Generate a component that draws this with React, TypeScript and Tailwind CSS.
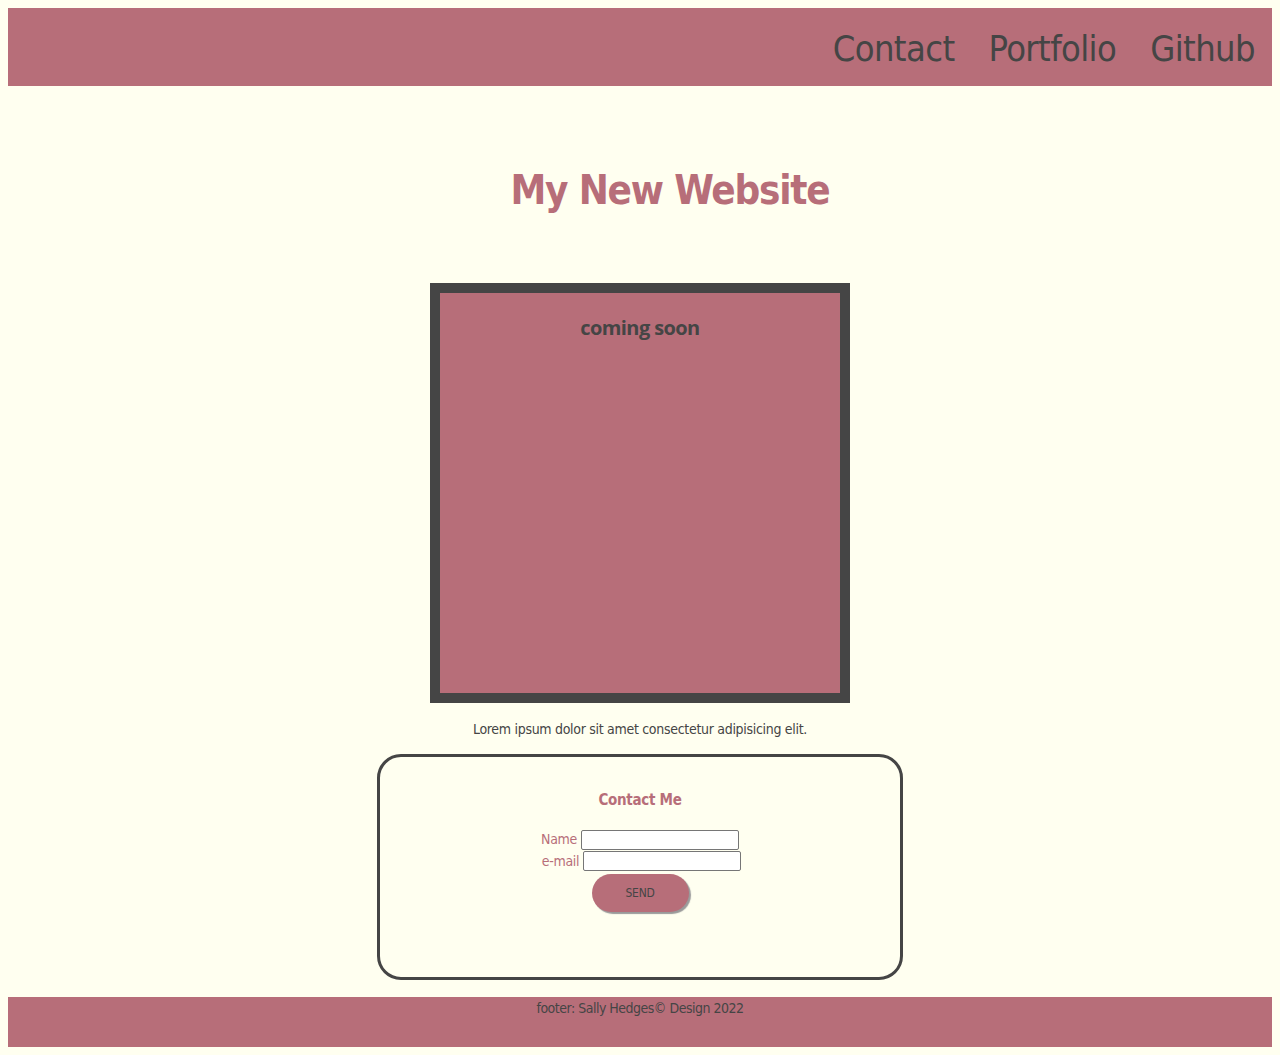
import React from "react";

const font = "font-['DejaVu_Sans_Condensed','Roboto',sans-serif]";

function Header() {
  return (
    <header className="bg-[#b76e79] h-[78px] flex items-center justify-end pr-[17px]">
      <nav className="flex gap-[34px] text-[36px] leading-none tracking-[-0.6px] text-[#454545] pt-[4px]">
        <a href="#contact">Contact</a>
        <a href="#portfolio">Portfolio</a>
        <a href="#github">Github</a>
      </nav>
    </header>
  );
}

function ContactForm() {
  return (
    <div className="w-[526px] h-[226px] mx-auto border-[3px] border-[#454545] rounded-[24px] flex flex-col items-center pt-[31px]">
      <h3 className="text-[#b76e79] font-bold text-[15px] leading-[24px] tracking-[-0.3px]">Contact Me</h3>
      <form className="mt-[17px] flex flex-col items-center text-[14px] tracking-[-0.3px] text-[#b76e79]">
        <label className="flex items-center gap-[4px] h-[21px]">
          Name
          <input type="text" className="w-[158px] h-[20px] bg-white border border-[#767676] rounded-[2px]" />
        </label>
        <label className="flex items-center gap-[4px] h-[22px] pl-[3px]">
          e-mail
          <input type="email" className="w-[158px] h-[20px] bg-white border border-[#767676] rounded-[2px]" />
        </label>
        <button
          type="submit"
          className="mt-[2px] w-[97px] h-[38px] rounded-full bg-[#b76e79] text-[#454545] text-[12px] shadow-[2px_2px_1px_#9a9a9a]"
        >
          SEND
        </button>
      </form>
    </div>
  );
}

export default function App() {
  return (
    <div className={`min-h-screen bg-[#fffff0] p-[8px] ${font}`}>
      <Header />
      <main className="flex flex-col items-center">
        <h1 className="mt-[72px] pl-[60px] text-[40px] leading-[64px] tracking-[-1.2px] font-bold text-[#b76e79]">My New Website</h1>
        <section className="mt-[61px] w-[420px] h-[420px] border-[10px] border-[#454545] bg-[#b76e79] flex justify-center">
          <h2 className="mt-[20px] font-['Open_Sans',sans-serif] font-bold text-[20px] leading-[30px] tracking-[-0.6px] text-[#454545]">coming soon</h2>
        </section>
        <p className="mt-[16px] text-[14px] leading-[20px] tracking-[-0.3px] text-[#454545]">Lorem ipsum dolor sit amet consectetur adipisicing elit.</p>
        <div className="mt-[15px] w-full">
          <ContactForm />
        </div>
      </main>
      <footer className="mt-[17px] bg-[#b76e79] h-[50px] flex justify-center pt-[1px] text-[14px] leading-[20px] tracking-[-0.5px] text-[#454545]">
        footer: Sally Hedges© Design 2022
      </footer>
    </div>
  );
}
